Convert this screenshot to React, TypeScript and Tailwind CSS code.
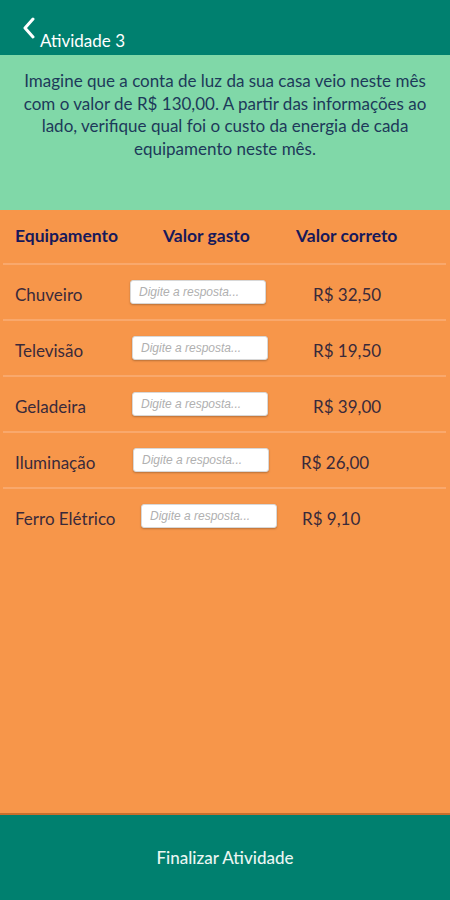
import React from "react";

const rows = [
  { name: "Chuveiro", nameW: "w-[115px]", valueMl: "ml-[47px]", value: "R$ 32,50", line: true },
  { name: "Televisão", nameW: "w-[117px]", valueMl: "ml-[45px]", value: "R$ 19,50", line: true },
  { name: "Geladeira", nameW: "w-[117px]", valueMl: "ml-[45px]", value: "R$ 39,00", line: true },
  { name: "Iluminação", nameW: "w-[118px]", valueMl: "ml-[32px]", value: "R$ 26,00", line: true },
  { name: "Ferro Elétrico", nameW: "w-[126px]", valueMl: "ml-[25px]", value: "R$ 9,10", line: false },
];

export default function App() {
  return (
    <div
      className="w-[450px] h-[900px] flex flex-col overflow-hidden"
      style={{ fontFamily: "Lato, 'Open Sans', sans-serif" }}
    >
      {/* Header */}
      <div className="h-[55px] bg-[#00806f] flex items-start pl-[22px] pt-[16px] shrink-0">
        <svg width="14" height="22" viewBox="0 0 14 22" className="mt-[1px]">
          <path d="M11 2 L3 11 L11 20" stroke="white" strokeWidth="3" fill="none" strokeLinecap="round" strokeLinejoin="round" />
        </svg>
        <span className="text-white text-[17px] ml-[4px] mt-[16px] leading-none">Atividade 3</span>
      </div>

      {/* Instructions */}
      <div className="h-[155px] bg-[#80d8a8] px-[10px] pt-[15px] shrink-0">
        <p className="text-center text-[17px] leading-[22.7px] text-[#1d3a5a]">
          Imagine que a conta de luz da sua casa veio neste mês com o valor de R$ 130,00. A partir das informações ao lado, verifique qual foi o custo da energia de cada equipamento neste mês.
        </p>
      </div>

      {/* Table */}
      <div className="flex-1 bg-[#f7964a] flex flex-col">
        <div className="h-[53px] flex items-center pl-[15px] text-[17.5px] font-bold text-[#17195a] shrink-0">
          <span className="w-[148px]">Equipamento</span>
          <span className="w-[133px]">Valor gasto</span>
          <span>Valor correto</span>
        </div>
        <div className="mx-[3px] h-[2px] bg-[#f9a86c] w-[443px]" />
        {rows.map((r) => (
          <div key={r.name} className="flex flex-col">
            <div className="h-[54px] flex items-center pl-[15px]">
              <span className={`${r.nameW} text-[17px] text-[#3a2a3a] mt-[5px]`}>{r.name}</span>
              <div className="w-[136px] h-[24px] bg-white rounded-[3px] border border-[#d8d8d8] shadow-[0_1px_2px_rgba(0,0,0,0.25)] flex items-center pl-[8px]">
                <span className="text-[12px] italic text-[#b0b0b0]" style={{ fontFamily: "'Liberation Sans', Arial, sans-serif" }}>
                  Digite a resposta...
                </span>
              </div>
              <span className={`${r.valueMl} text-[17px] text-[#3a2a3a] mt-[5px]`}>{r.value}</span>
            </div>
            {r.line && <div className="mx-[3px] h-[2px] bg-[#f9a86c] w-[443px]" />}
          </div>
        ))}
      </div>

      {/* Footer */}
      <div className="h-[87px] bg-[#00806f] border-t-[2px] border-[#c76f2c] flex items-center justify-center shrink-0">
        <span className="text-[17px] text-[#eaf6f2] font-medium">Finalizar Atividade</span>
      </div>
    </div>
  );
}
